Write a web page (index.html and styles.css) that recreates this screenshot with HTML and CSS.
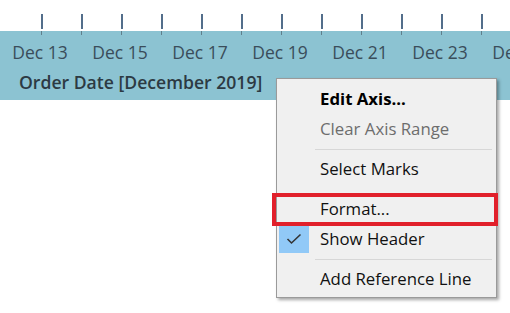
FILE: index.html
```html
<!DOCTYPE html>
<html>
<head>
<meta charset="utf-8">
<link rel="stylesheet" href="styles.css">
</head>
<body>
<div class="page">
  <div class="ticks">
    <span class="tick"></span><span class="tick"></span><span class="tick"></span><span class="tick"></span>
    <span class="tick"></span><span class="tick"></span><span class="tick"></span><span class="tick"></span>
    <span class="tick"></span><span class="tick"></span><span class="tick"></span><span class="tick"></span>
  </div>
  <div class="band">
    <div class="minor">
      <span class="mtick"></span><span class="mtick"></span><span class="mtick"></span><span class="mtick"></span>
      <span class="mtick"></span><span class="mtick"></span><span class="mtick"></span><span class="mtick"></span>
      <span class="mtick"></span><span class="mtick"></span><span class="mtick"></span><span class="mtick"></span>
    </div>
    <div class="labels">
      <span class="lbl">Dec 13</span><span class="lbl">Dec 15</span><span class="lbl">Dec 17</span><span class="lbl">Dec 19</span>
      <span class="lbl">Dec 21</span><span class="lbl">Dec 23</span><span class="lbl">Dec 25</span>
    </div>
    <div class="title">Order Date [December 2019]</div>
  </div>

  <div class="menu">
    <div class="item bold">Edit Axis...</div>
    <div class="item disabled">Clear Axis Range</div>
    <div class="sep"><span></span></div>
    <div class="item">Select Marks</div>
    <div class="sep blank"></div>
    <div class="item">Format...</div>
    <div class="item checked">
      <span class="check"><svg width="30" height="28" viewBox="0 0 30 28"><path d="M8.5 14 L12.5 18 L21.5 9.5" fill="none" stroke="#333" stroke-width="1.6"/></svg></span>
      Show Header
    </div>
    <div class="sep"><span></span></div>
    <div class="item">Add Reference Line</div>
  </div>
  <div class="redbox"></div>
</div>
</body>
</html>
```

FILE: styles.css
```css
html, body {
  margin: 0;
  padding: 0;
  background: #ffffff;
}
.page {
  position: relative;
  width: 510px;
  height: 313px;
  overflow: hidden;
  font-family: "Open Sans", "Noto Sans", sans-serif;
}
.ticks {
  display: flex;
  gap: 38px;
  padding-left: 41px;
  padding-top: 14px;
  box-sizing: border-box;
  height: 31px;
}
.tick {
  flex: none;
  width: 2px;
  height: 15px;
  background: #536e8b;
}
.band {
  background: #8cc3d2;
  height: 69px;
  position: relative;
}
.minor {
  display: flex;
  gap: 39px;
  padding-left: 41px;
  height: 4px;
}
.mtick {
  flex: none;
  width: 1px;
  height: 4px;
  background: #5f7f8c;
}
.labels {
  display: flex;
  white-space: nowrap;
  padding-top: 5px;
  height: 25px;
}
.lbl {
  flex: none;
  width: 80px;
  text-align: center;
  font-size: 17.5px;
  color: #3a4d5a;
  line-height: 25px;
}
.title {
  padding-left: 19px;
  font-size: 17.6px;
  font-weight: 600;
  color: #2c3a43;
  line-height: 26px;
  padding-top: 4px;
}
.menu {
  position: absolute;
  left: 276px;
  top: 78px;
  width: 219px;
  background: #f0f0f0;
  border: 1px solid #9a9a9a;
  box-shadow: 2px 2px 3px rgba(0, 0, 0, 0.35);
  padding: 5px 0 3px 0;
}
.item {
  position: relative;
  height: 30px;
  line-height: 30px;
  padding-left: 43px;
  font-size: 16.8px;
  color: #111;
  white-space: nowrap;
}
.item.bold {
  font-weight: 700;
  color: #000;
}
.item.disabled {
  color: #6d6d6d;
}
.check {
  position: absolute;
  left: 2px;
  top: 1px;
  width: 30px;
  height: 28px;
  background: #91c9f7;
  display: flex;
}
.sep {
  height: 10px;
  display: flex;
  align-items: center;
  padding-left: 38px;
  padding-right: 4px;
}
.sep span {
  flex: 1;
  height: 1px;
  background: #d7d7d7;
}
.redbox {
  position: absolute;
  left: 272px;
  top: 193px;
  width: 226px;
  height: 33px;
  box-sizing: border-box;
  border: 4px solid #e1202b;
}
```
